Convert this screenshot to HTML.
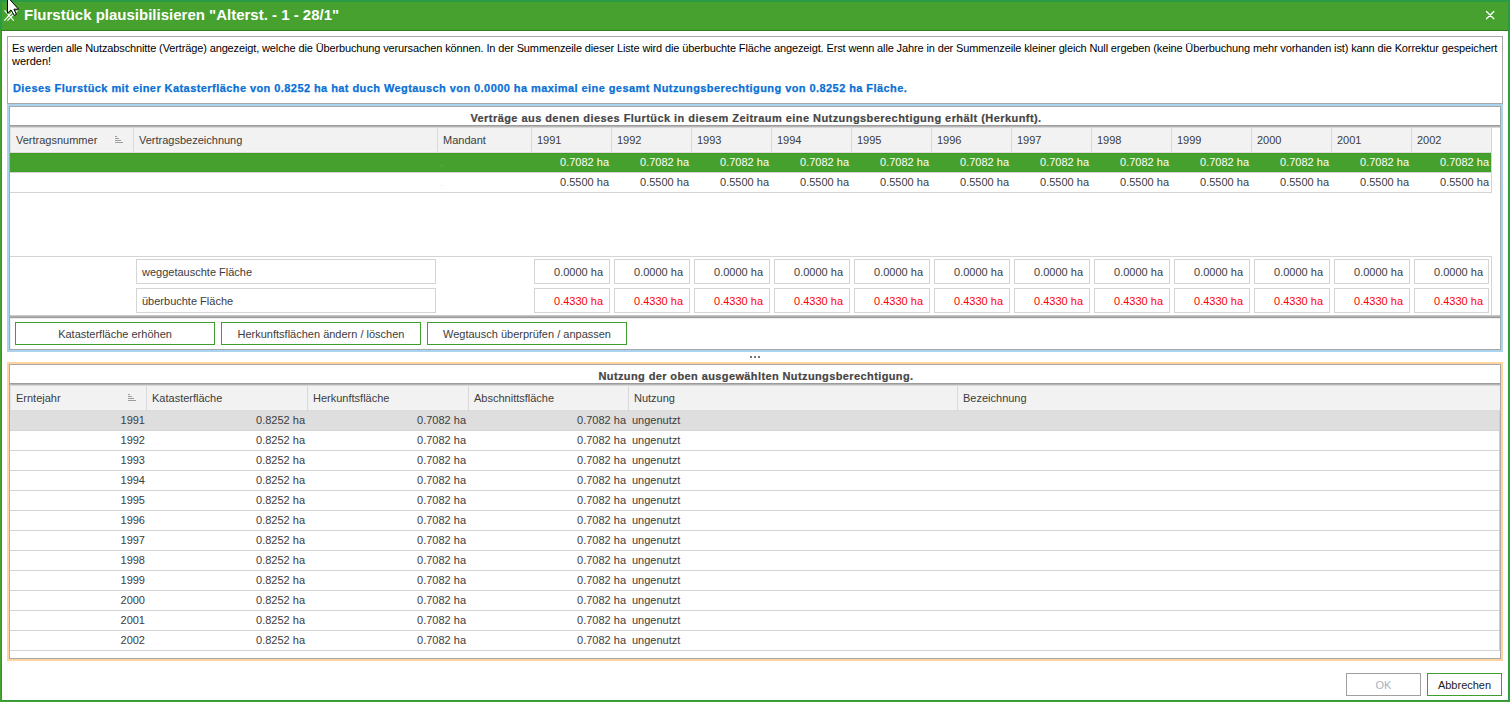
<!DOCTYPE html>
<html><head><meta charset="utf-8"><style>
html,body{margin:0;padding:0;width:1510px;height:702px;overflow:hidden;background:#fff;position:relative}
body>div,body>svg{position:absolute}
.t{font-family:"Liberation Sans",sans-serif;font-size:11px;line-height:13px;white-space:pre}
</style></head><body>
<div style="left:0px;top:0px;width:1510px;height:702px;background:#47A12F"></div>
<div style="left:0px;top:0px;width:1510px;height:2px;background:#2B9A45"></div>
<div style="left:0px;top:0px;width:2px;height:30px;background:#2B9A45"></div>
<div style="left:1508px;top:0px;width:2px;height:30px;background:#2B9A45"></div>
<div style="left:2px;top:2px;width:1506px;height:28px;background:#47A12F"></div>
<div style="left:1px;top:31px;width:1508px;height:670px;background:#2C973D"></div>
<div style="left:2px;top:31px;width:1506px;height:669px;background:#FFFFFF"></div>
<div style="left:1px;top:30px;width:1508px;height:1px;background:#2E7F1E"></div>
<div class="t" style="left:24px;top:6px;font-size:15px;font-weight:bold;color:#fff;line-height:17px;">Flurstück plausibilisieren "Alterst. - 1 - 28/1"</div>
<svg style="left:1485px;top:10px" width="11" height="11" viewBox="0 0 11 11"><path d="M1.5 1.5L8.8 8.8M8.8 1.5L1.5 8.8" stroke="#fff" stroke-width="1.3" stroke-linecap="round"/></svg>
<svg style="left:0px;top:0px" width="24" height="24" viewBox="0 0 24 24"><g stroke="#fff" stroke-width="1.15" fill="none"><path d="M4.5 10.3L13.8 20.6"/><path d="M4.3 20.6L14 10"/><path d="M7.4 20.6L17.6 10.4"/></g></svg>
<div style="left:7px;top:36px;width:1496px;height:68px;border:1px solid #A8A8A8;box-sizing:border-box;background:#fff"></div>
<div class="t" style="left:12px;top:42px;color:#000;letter-spacing:-0.13px">Es werden alle Nutzabschnitte (Verträge) angezeigt, welche die Überbuchung verursachen können. In der Summenzeile dieser Liste wird die überbuchte Fläche angezeigt. Erst wenn alle Jahre in der Summenzeile kleiner gleich Null ergeben (keine Überbuchung mehr vorhanden ist) kann die Korrektur gespeichert</div>
<div class="t" style="left:12px;top:55px;color:#000">werden!</div>
<div class="t" style="left:13px;top:82px;color:#0A70D6;font-weight:bold;letter-spacing:0.43px;-webkit-text-stroke:0.25px #0A70D6">Dieses Flurstück mit einer Katasterfläche von 0.8252 ha hat duch Wegtausch von 0.0000 ha maximal eine gesamt Nutzungsberechtigung von 0.8252 ha Fläche.</div>
<div style="left:7px;top:104px;width:1496px;height:248px;background:#AAD3F0"></div>
<div style="left:9px;top:106px;width:1492px;height:244px;border:1px solid #A8A8A8;box-sizing:border-box;background:#fff"></div>
<div class="t" style="left:256px;top:112px;width:1000px;text-align:center;font-weight:bold;color:#454545;letter-spacing:0.44px;-webkit-text-stroke:0.2px #454545">Verträge aus denen dieses Flurtück in diesem Zeitraum eine Nutzungsberechtigung erhält (Herkunft).</div>
<div style="left:10px;top:127px;width:1481px;height:25px;background:#F2F2F2"></div>
<div style="left:10px;top:151px;width:1481px;height:1px;background:#F5F5F5"></div>
<div style="left:10px;top:152px;width:1481px;height:1px;background:#DCDADC"></div>
<div style="left:133px;top:127px;width:1px;height:25px;background:#D9D9D9"></div>
<div style="left:437px;top:127px;width:1px;height:25px;background:#D9D9D9"></div>
<div style="left:531px;top:127px;width:1px;height:25px;background:#D9D9D9"></div>
<div style="left:611px;top:127px;width:1px;height:25px;background:#D9D9D9"></div>
<div style="left:691px;top:127px;width:1px;height:25px;background:#D9D9D9"></div>
<div style="left:771px;top:127px;width:1px;height:25px;background:#D9D9D9"></div>
<div style="left:851px;top:127px;width:1px;height:25px;background:#D9D9D9"></div>
<div style="left:931px;top:127px;width:1px;height:25px;background:#D9D9D9"></div>
<div style="left:1011px;top:127px;width:1px;height:25px;background:#D9D9D9"></div>
<div style="left:1091px;top:127px;width:1px;height:25px;background:#D9D9D9"></div>
<div style="left:1171px;top:127px;width:1px;height:25px;background:#D9D9D9"></div>
<div style="left:1251px;top:127px;width:1px;height:25px;background:#D9D9D9"></div>
<div style="left:1331px;top:127px;width:1px;height:25px;background:#D9D9D9"></div>
<div style="left:1411px;top:127px;width:1px;height:25px;background:#D9D9D9"></div>
<div style="left:1491px;top:127px;width:1px;height:25px;background:#D9D9D9"></div>
<div style="left:10px;top:127px;width:1px;height:25px;background:#E4E4E4"></div>
<div style="left:10px;top:125px;width:1490px;height:1px;background:#9C9C9C"></div>
<div style="left:10px;top:126px;width:1490px;height:1px;background:#B4B4B4"></div>
<div style="left:10px;top:127px;width:1490px;height:1px;background:#D8D8D8"></div>
<div class="t" style="left:16px;top:134px;color:#3C3C3C">Vertragsnummer</div>
<div class="t" style="left:139px;top:134px;color:#3C3C3C">Vertragsbezeichnung</div>
<div class="t" style="left:443px;top:134px;color:#3C3C3C">Mandant</div>
<div class="t" style="left:537px;top:134px;color:#3C3C3C">1991</div>
<div class="t" style="left:617px;top:134px;color:#3C3C3C">1992</div>
<div class="t" style="left:697px;top:134px;color:#3C3C3C">1993</div>
<div class="t" style="left:777px;top:134px;color:#3C3C3C">1994</div>
<div class="t" style="left:857px;top:134px;color:#3C3C3C">1995</div>
<div class="t" style="left:937px;top:134px;color:#3C3C3C">1996</div>
<div class="t" style="left:1017px;top:134px;color:#3C3C3C">1997</div>
<div class="t" style="left:1097px;top:134px;color:#3C3C3C">1998</div>
<div class="t" style="left:1177px;top:134px;color:#3C3C3C">1999</div>
<div class="t" style="left:1257px;top:134px;color:#3C3C3C">2000</div>
<div class="t" style="left:1337px;top:134px;color:#3C3C3C">2001</div>
<div class="t" style="left:1417px;top:134px;color:#3C3C3C">2002</div>
<svg style="left:115px;top:135px" width="9" height="9" viewBox="0 0 9 9"><g fill="#9C9C9C"><rect x="0" y="1" width="2" height="1"/><rect x="0" y="3" width="4" height="1"/><rect x="0" y="5" width="6" height="1"/><rect x="0" y="7" width="8" height="1"/></g></svg>
<div style="left:10px;top:153px;width:1481px;height:19px;background:#46A02E"></div>
<div style="left:10px;top:153px;width:1481px;height:1px;background:#3F9C24"></div>
<div style="left:10px;top:171px;width:1481px;height:1px;background:#3F9C24"></div>
<div style="left:10px;top:172px;width:1481px;height:1px;background:#D4D4D4"></div>
<div style="left:10px;top:192px;width:1481px;height:1px;background:#D4D4D4"></div>
<div class="t" style="left:309px;top:156px;width:300px;text-align:right;color:#fff">0.7082 ha</div>
<div class="t" style="left:309px;top:176px;width:300px;text-align:right;color:#3C3C3C">0.5500 ha</div>
<div class="t" style="left:389px;top:156px;width:300px;text-align:right;color:#fff">0.7082 ha</div>
<div class="t" style="left:389px;top:176px;width:300px;text-align:right;color:#3C3C3C">0.5500 ha</div>
<div class="t" style="left:469px;top:156px;width:300px;text-align:right;color:#fff">0.7082 ha</div>
<div class="t" style="left:469px;top:176px;width:300px;text-align:right;color:#3C3C3C">0.5500 ha</div>
<div class="t" style="left:549px;top:156px;width:300px;text-align:right;color:#fff">0.7082 ha</div>
<div class="t" style="left:549px;top:176px;width:300px;text-align:right;color:#3C3C3C">0.5500 ha</div>
<div class="t" style="left:629px;top:156px;width:300px;text-align:right;color:#fff">0.7082 ha</div>
<div class="t" style="left:629px;top:176px;width:300px;text-align:right;color:#3C3C3C">0.5500 ha</div>
<div class="t" style="left:709px;top:156px;width:300px;text-align:right;color:#fff">0.7082 ha</div>
<div class="t" style="left:709px;top:176px;width:300px;text-align:right;color:#3C3C3C">0.5500 ha</div>
<div class="t" style="left:789px;top:156px;width:300px;text-align:right;color:#fff">0.7082 ha</div>
<div class="t" style="left:789px;top:176px;width:300px;text-align:right;color:#3C3C3C">0.5500 ha</div>
<div class="t" style="left:869px;top:156px;width:300px;text-align:right;color:#fff">0.7082 ha</div>
<div class="t" style="left:869px;top:176px;width:300px;text-align:right;color:#3C3C3C">0.5500 ha</div>
<div class="t" style="left:949px;top:156px;width:300px;text-align:right;color:#fff">0.7082 ha</div>
<div class="t" style="left:949px;top:176px;width:300px;text-align:right;color:#3C3C3C">0.5500 ha</div>
<div class="t" style="left:1029px;top:156px;width:300px;text-align:right;color:#fff">0.7082 ha</div>
<div class="t" style="left:1029px;top:176px;width:300px;text-align:right;color:#3C3C3C">0.5500 ha</div>
<div class="t" style="left:1109px;top:156px;width:300px;text-align:right;color:#fff">0.7082 ha</div>
<div class="t" style="left:1109px;top:176px;width:300px;text-align:right;color:#3C3C3C">0.5500 ha</div>
<div class="t" style="left:1189px;top:156px;width:300px;text-align:right;color:#fff">0.7082 ha</div>
<div class="t" style="left:1189px;top:176px;width:300px;text-align:right;color:#3C3C3C">0.5500 ha</div>
<div style="left:441px;top:165px;width:1px;height:1px;background:#62B0C0"></div>
<div style="left:441px;top:185px;width:1px;height:1px;background:#F5D9A8"></div>
<div style="left:1491px;top:127px;width:1px;height:66px;background:#D4D4D4"></div>
<div style="left:1491px;top:256px;width:1px;height:60px;background:#D4D4D4"></div>
<div style="left:10px;top:256px;width:1482px;height:1px;background:#D4D4D4"></div>
<div style="left:136px;top:259px;width:300px;height:25px;border:1px solid #D4D4D4;box-sizing:border-box;background:#fff"></div>
<div style="left:136px;top:288px;width:300px;height:25px;border:1px solid #D4D4D4;box-sizing:border-box;background:#fff"></div>
<div class="t" style="left:142px;top:266px;color:#3C3C3C">weggetauschte Fläche</div>
<div class="t" style="left:142px;top:295px;color:#3C3C3C">überbuchte Fläche</div>
<div style="left:534px;top:259px;width:76px;height:25px;border:1px solid #D4D4D4;box-sizing:border-box;background:#fff"></div>
<div style="left:534px;top:288px;width:76px;height:25px;border:1px solid #D4D4D4;box-sizing:border-box;background:#fff"></div>
<div class="t" style="left:303px;top:266px;width:300px;text-align:right;color:#3C3C3C">0.0000 ha</div>
<div class="t" style="left:303px;top:295px;width:300px;text-align:right;color:#FF0000">0.4330 ha</div>
<div style="left:614px;top:259px;width:76px;height:25px;border:1px solid #D4D4D4;box-sizing:border-box;background:#fff"></div>
<div style="left:614px;top:288px;width:76px;height:25px;border:1px solid #D4D4D4;box-sizing:border-box;background:#fff"></div>
<div class="t" style="left:383px;top:266px;width:300px;text-align:right;color:#3C3C3C">0.0000 ha</div>
<div class="t" style="left:383px;top:295px;width:300px;text-align:right;color:#FF0000">0.4330 ha</div>
<div style="left:694px;top:259px;width:76px;height:25px;border:1px solid #D4D4D4;box-sizing:border-box;background:#fff"></div>
<div style="left:694px;top:288px;width:76px;height:25px;border:1px solid #D4D4D4;box-sizing:border-box;background:#fff"></div>
<div class="t" style="left:463px;top:266px;width:300px;text-align:right;color:#3C3C3C">0.0000 ha</div>
<div class="t" style="left:463px;top:295px;width:300px;text-align:right;color:#FF0000">0.4330 ha</div>
<div style="left:774px;top:259px;width:76px;height:25px;border:1px solid #D4D4D4;box-sizing:border-box;background:#fff"></div>
<div style="left:774px;top:288px;width:76px;height:25px;border:1px solid #D4D4D4;box-sizing:border-box;background:#fff"></div>
<div class="t" style="left:543px;top:266px;width:300px;text-align:right;color:#3C3C3C">0.0000 ha</div>
<div class="t" style="left:543px;top:295px;width:300px;text-align:right;color:#FF0000">0.4330 ha</div>
<div style="left:854px;top:259px;width:76px;height:25px;border:1px solid #D4D4D4;box-sizing:border-box;background:#fff"></div>
<div style="left:854px;top:288px;width:76px;height:25px;border:1px solid #D4D4D4;box-sizing:border-box;background:#fff"></div>
<div class="t" style="left:623px;top:266px;width:300px;text-align:right;color:#3C3C3C">0.0000 ha</div>
<div class="t" style="left:623px;top:295px;width:300px;text-align:right;color:#FF0000">0.4330 ha</div>
<div style="left:934px;top:259px;width:76px;height:25px;border:1px solid #D4D4D4;box-sizing:border-box;background:#fff"></div>
<div style="left:934px;top:288px;width:76px;height:25px;border:1px solid #D4D4D4;box-sizing:border-box;background:#fff"></div>
<div class="t" style="left:703px;top:266px;width:300px;text-align:right;color:#3C3C3C">0.0000 ha</div>
<div class="t" style="left:703px;top:295px;width:300px;text-align:right;color:#FF0000">0.4330 ha</div>
<div style="left:1014px;top:259px;width:76px;height:25px;border:1px solid #D4D4D4;box-sizing:border-box;background:#fff"></div>
<div style="left:1014px;top:288px;width:76px;height:25px;border:1px solid #D4D4D4;box-sizing:border-box;background:#fff"></div>
<div class="t" style="left:783px;top:266px;width:300px;text-align:right;color:#3C3C3C">0.0000 ha</div>
<div class="t" style="left:783px;top:295px;width:300px;text-align:right;color:#FF0000">0.4330 ha</div>
<div style="left:1094px;top:259px;width:76px;height:25px;border:1px solid #D4D4D4;box-sizing:border-box;background:#fff"></div>
<div style="left:1094px;top:288px;width:76px;height:25px;border:1px solid #D4D4D4;box-sizing:border-box;background:#fff"></div>
<div class="t" style="left:863px;top:266px;width:300px;text-align:right;color:#3C3C3C">0.0000 ha</div>
<div class="t" style="left:863px;top:295px;width:300px;text-align:right;color:#FF0000">0.4330 ha</div>
<div style="left:1174px;top:259px;width:76px;height:25px;border:1px solid #D4D4D4;box-sizing:border-box;background:#fff"></div>
<div style="left:1174px;top:288px;width:76px;height:25px;border:1px solid #D4D4D4;box-sizing:border-box;background:#fff"></div>
<div class="t" style="left:943px;top:266px;width:300px;text-align:right;color:#3C3C3C">0.0000 ha</div>
<div class="t" style="left:943px;top:295px;width:300px;text-align:right;color:#FF0000">0.4330 ha</div>
<div style="left:1254px;top:259px;width:76px;height:25px;border:1px solid #D4D4D4;box-sizing:border-box;background:#fff"></div>
<div style="left:1254px;top:288px;width:76px;height:25px;border:1px solid #D4D4D4;box-sizing:border-box;background:#fff"></div>
<div class="t" style="left:1023px;top:266px;width:300px;text-align:right;color:#3C3C3C">0.0000 ha</div>
<div class="t" style="left:1023px;top:295px;width:300px;text-align:right;color:#FF0000">0.4330 ha</div>
<div style="left:1334px;top:259px;width:76px;height:25px;border:1px solid #D4D4D4;box-sizing:border-box;background:#fff"></div>
<div style="left:1334px;top:288px;width:76px;height:25px;border:1px solid #D4D4D4;box-sizing:border-box;background:#fff"></div>
<div class="t" style="left:1103px;top:266px;width:300px;text-align:right;color:#3C3C3C">0.0000 ha</div>
<div class="t" style="left:1103px;top:295px;width:300px;text-align:right;color:#FF0000">0.4330 ha</div>
<div style="left:1414px;top:259px;width:75px;height:25px;border:1px solid #D4D4D4;box-sizing:border-box;background:#fff"></div>
<div style="left:1414px;top:288px;width:75px;height:25px;border:1px solid #D4D4D4;box-sizing:border-box;background:#fff"></div>
<div class="t" style="left:1183px;top:266px;width:300px;text-align:right;color:#3C3C3C">0.0000 ha</div>
<div class="t" style="left:1183px;top:295px;width:300px;text-align:right;color:#FF0000">0.4330 ha</div>
<div style="left:10px;top:315px;width:1490px;height:1px;background:#C8C8C8"></div>
<div style="left:10px;top:316px;width:1490px;height:1px;background:#AEAEAE"></div>
<div style="left:10px;top:317px;width:1490px;height:1px;background:#9C9C9C"></div>
<div style="left:10px;top:318px;width:1490px;height:1px;background:#EEEEEE"></div>
<div style="left:10px;top:318px;width:1px;height:31px;background:#EEEEEE"></div>
<div style="left:15px;top:322px;width:200px;height:23px;border:1px solid #3F9F2E;box-sizing:border-box;background:#fff"></div>
<div class="t" style="left:-385.0px;top:328px;width:1000px;text-align:center;color:#3C3C3C">Katasterfläche erhöhen</div>
<div style="left:221px;top:322px;width:200px;height:23px;border:1px solid #3F9F2E;box-sizing:border-box;background:#fff"></div>
<div class="t" style="left:-179.0px;top:328px;width:1000px;text-align:center;color:#3C3C3C">Herkunftsflächen ändern / löschen</div>
<div style="left:427px;top:322px;width:200px;height:23px;border:1px solid #3F9F2E;box-sizing:border-box;background:#fff"></div>
<div class="t" style="left:27.0px;top:328px;width:1000px;text-align:center;color:#3C3C3C">Wegtausch überprüfen / anpassen</div>
<div style="left:750px;top:356px;width:2px;height:2px;background:#767676"></div>
<div style="left:754px;top:356px;width:2px;height:2px;background:#767676"></div>
<div style="left:758px;top:356px;width:2px;height:2px;background:#767676"></div>
<div style="left:7px;top:362px;width:1496px;height:299px;background:#FFD49E"></div>
<div style="left:9px;top:364px;width:1492px;height:295px;border:1px solid #A8A8A8;box-sizing:border-box;background:#fff"></div>
<div class="t" style="left:256px;top:370px;width:1000px;text-align:center;font-weight:bold;color:#454545;letter-spacing:0.39px;-webkit-text-stroke:0.2px #454545">Nutzung der oben ausgewählten Nutzungsberechtigung.</div>
<div style="left:10px;top:385px;width:1490px;height:25px;background:#F2F2F2"></div>
<div style="left:10px;top:409px;width:1490px;height:1px;background:#F5F5F5"></div>
<div style="left:10px;top:410px;width:1490px;height:1px;background:#DCDADC"></div>
<div style="left:10px;top:383px;width:1490px;height:1px;background:#9C9C9C"></div>
<div style="left:10px;top:384px;width:1490px;height:1px;background:#B4B4B4"></div>
<div style="left:10px;top:385px;width:1490px;height:1px;background:#D8D8D8"></div>
<div style="left:146px;top:385px;width:1px;height:25px;background:#D9D9D9"></div>
<div style="left:307px;top:385px;width:1px;height:25px;background:#D9D9D9"></div>
<div style="left:468px;top:385px;width:1px;height:25px;background:#D9D9D9"></div>
<div style="left:628px;top:385px;width:1px;height:25px;background:#D9D9D9"></div>
<div style="left:957px;top:385px;width:1px;height:25px;background:#D9D9D9"></div>
<div style="left:10px;top:385px;width:1px;height:25px;background:#E4E4E4"></div>
<div class="t" style="left:16px;top:392px;color:#3C3C3C">Erntejahr</div>
<div class="t" style="left:152px;top:392px;color:#3C3C3C">Katasterfläche</div>
<div class="t" style="left:313px;top:392px;color:#3C3C3C">Herkunftsfläche</div>
<div class="t" style="left:474px;top:392px;color:#3C3C3C">Abschnittsfläche</div>
<div class="t" style="left:634px;top:392px;color:#3C3C3C">Nutzung</div>
<div class="t" style="left:963px;top:392px;color:#3C3C3C">Bezeichnung</div>
<svg style="left:128px;top:393px" width="9" height="9" viewBox="0 0 9 9"><g fill="#9C9C9C"><rect x="0" y="1" width="2" height="1"/><rect x="0" y="3" width="4" height="1"/><rect x="0" y="5" width="6" height="1"/><rect x="0" y="7" width="8" height="1"/></g></svg>
<div style="left:10px;top:411px;width:1490px;height:19px;background:#DEDEDE"></div>
<div style="left:10px;top:430px;width:1490px;height:1px;background:#D4D4D4"></div>
<div class="t" style="left:-155px;top:414px;width:300px;text-align:right;color:#3C3C3C">1991</div>
<div class="t" style="left:5px;top:414px;width:300px;text-align:right;color:#3C3C3C">0.8252 ha</div>
<div class="t" style="left:166px;top:414px;width:300px;text-align:right;color:#3C3C3C">0.7082 ha</div>
<div class="t" style="left:326px;top:414px;width:300px;text-align:right;color:#3C3C3C">0.7082 ha</div>
<div class="t" style="left:632px;top:414px;color:#3C3C3C">ungenutzt</div>
<div style="left:10px;top:450px;width:1490px;height:1px;background:#D4D4D4"></div>
<div class="t" style="left:-155px;top:434px;width:300px;text-align:right;color:#3C3C3C">1992</div>
<div class="t" style="left:5px;top:434px;width:300px;text-align:right;color:#3C3C3C">0.8252 ha</div>
<div class="t" style="left:166px;top:434px;width:300px;text-align:right;color:#3C3C3C">0.7082 ha</div>
<div class="t" style="left:326px;top:434px;width:300px;text-align:right;color:#3C3C3C">0.7082 ha</div>
<div class="t" style="left:632px;top:434px;color:#3C3C3C">ungenutzt</div>
<div style="left:10px;top:470px;width:1490px;height:1px;background:#D4D4D4"></div>
<div class="t" style="left:-155px;top:454px;width:300px;text-align:right;color:#3C3C3C">1993</div>
<div class="t" style="left:5px;top:454px;width:300px;text-align:right;color:#3C3C3C">0.8252 ha</div>
<div class="t" style="left:166px;top:454px;width:300px;text-align:right;color:#3C3C3C">0.7082 ha</div>
<div class="t" style="left:326px;top:454px;width:300px;text-align:right;color:#3C3C3C">0.7082 ha</div>
<div class="t" style="left:632px;top:454px;color:#3C3C3C">ungenutzt</div>
<div style="left:10px;top:490px;width:1490px;height:1px;background:#D4D4D4"></div>
<div class="t" style="left:-155px;top:474px;width:300px;text-align:right;color:#3C3C3C">1994</div>
<div class="t" style="left:5px;top:474px;width:300px;text-align:right;color:#3C3C3C">0.8252 ha</div>
<div class="t" style="left:166px;top:474px;width:300px;text-align:right;color:#3C3C3C">0.7082 ha</div>
<div class="t" style="left:326px;top:474px;width:300px;text-align:right;color:#3C3C3C">0.7082 ha</div>
<div class="t" style="left:632px;top:474px;color:#3C3C3C">ungenutzt</div>
<div style="left:10px;top:510px;width:1490px;height:1px;background:#D4D4D4"></div>
<div class="t" style="left:-155px;top:494px;width:300px;text-align:right;color:#3C3C3C">1995</div>
<div class="t" style="left:5px;top:494px;width:300px;text-align:right;color:#3C3C3C">0.8252 ha</div>
<div class="t" style="left:166px;top:494px;width:300px;text-align:right;color:#3C3C3C">0.7082 ha</div>
<div class="t" style="left:326px;top:494px;width:300px;text-align:right;color:#3C3C3C">0.7082 ha</div>
<div class="t" style="left:632px;top:494px;color:#3C3C3C">ungenutzt</div>
<div style="left:10px;top:530px;width:1490px;height:1px;background:#D4D4D4"></div>
<div class="t" style="left:-155px;top:514px;width:300px;text-align:right;color:#3C3C3C">1996</div>
<div class="t" style="left:5px;top:514px;width:300px;text-align:right;color:#3C3C3C">0.8252 ha</div>
<div class="t" style="left:166px;top:514px;width:300px;text-align:right;color:#3C3C3C">0.7082 ha</div>
<div class="t" style="left:326px;top:514px;width:300px;text-align:right;color:#3C3C3C">0.7082 ha</div>
<div class="t" style="left:632px;top:514px;color:#3C3C3C">ungenutzt</div>
<div style="left:10px;top:550px;width:1490px;height:1px;background:#D4D4D4"></div>
<div class="t" style="left:-155px;top:534px;width:300px;text-align:right;color:#3C3C3C">1997</div>
<div class="t" style="left:5px;top:534px;width:300px;text-align:right;color:#3C3C3C">0.8252 ha</div>
<div class="t" style="left:166px;top:534px;width:300px;text-align:right;color:#3C3C3C">0.7082 ha</div>
<div class="t" style="left:326px;top:534px;width:300px;text-align:right;color:#3C3C3C">0.7082 ha</div>
<div class="t" style="left:632px;top:534px;color:#3C3C3C">ungenutzt</div>
<div style="left:10px;top:570px;width:1490px;height:1px;background:#D4D4D4"></div>
<div class="t" style="left:-155px;top:554px;width:300px;text-align:right;color:#3C3C3C">1998</div>
<div class="t" style="left:5px;top:554px;width:300px;text-align:right;color:#3C3C3C">0.8252 ha</div>
<div class="t" style="left:166px;top:554px;width:300px;text-align:right;color:#3C3C3C">0.7082 ha</div>
<div class="t" style="left:326px;top:554px;width:300px;text-align:right;color:#3C3C3C">0.7082 ha</div>
<div class="t" style="left:632px;top:554px;color:#3C3C3C">ungenutzt</div>
<div style="left:10px;top:590px;width:1490px;height:1px;background:#D4D4D4"></div>
<div class="t" style="left:-155px;top:574px;width:300px;text-align:right;color:#3C3C3C">1999</div>
<div class="t" style="left:5px;top:574px;width:300px;text-align:right;color:#3C3C3C">0.8252 ha</div>
<div class="t" style="left:166px;top:574px;width:300px;text-align:right;color:#3C3C3C">0.7082 ha</div>
<div class="t" style="left:326px;top:574px;width:300px;text-align:right;color:#3C3C3C">0.7082 ha</div>
<div class="t" style="left:632px;top:574px;color:#3C3C3C">ungenutzt</div>
<div style="left:10px;top:610px;width:1490px;height:1px;background:#D4D4D4"></div>
<div class="t" style="left:-155px;top:594px;width:300px;text-align:right;color:#3C3C3C">2000</div>
<div class="t" style="left:5px;top:594px;width:300px;text-align:right;color:#3C3C3C">0.8252 ha</div>
<div class="t" style="left:166px;top:594px;width:300px;text-align:right;color:#3C3C3C">0.7082 ha</div>
<div class="t" style="left:326px;top:594px;width:300px;text-align:right;color:#3C3C3C">0.7082 ha</div>
<div class="t" style="left:632px;top:594px;color:#3C3C3C">ungenutzt</div>
<div style="left:10px;top:630px;width:1490px;height:1px;background:#D4D4D4"></div>
<div class="t" style="left:-155px;top:614px;width:300px;text-align:right;color:#3C3C3C">2001</div>
<div class="t" style="left:5px;top:614px;width:300px;text-align:right;color:#3C3C3C">0.8252 ha</div>
<div class="t" style="left:166px;top:614px;width:300px;text-align:right;color:#3C3C3C">0.7082 ha</div>
<div class="t" style="left:326px;top:614px;width:300px;text-align:right;color:#3C3C3C">0.7082 ha</div>
<div class="t" style="left:632px;top:614px;color:#3C3C3C">ungenutzt</div>
<div style="left:10px;top:650px;width:1490px;height:1px;background:#D4D4D4"></div>
<div class="t" style="left:-155px;top:634px;width:300px;text-align:right;color:#3C3C3C">2002</div>
<div class="t" style="left:5px;top:634px;width:300px;text-align:right;color:#3C3C3C">0.8252 ha</div>
<div class="t" style="left:166px;top:634px;width:300px;text-align:right;color:#3C3C3C">0.7082 ha</div>
<div class="t" style="left:326px;top:634px;width:300px;text-align:right;color:#3C3C3C">0.7082 ha</div>
<div class="t" style="left:632px;top:634px;color:#3C3C3C">ungenutzt</div>
<div style="left:1499px;top:411px;width:1px;height:240px;background:#CFCFCF"></div>
<div style="left:1346px;top:673px;width:75px;height:23px;border:1px solid #A0A0A0;box-sizing:border-box;background:#fff"></div>
<div class="t" style="left:883.5px;top:679px;width:1000px;text-align:center;color:#A8B0C0">OK</div>
<div style="left:1427px;top:673px;width:75px;height:23px;border:1px solid #3F9F2E;box-sizing:border-box;background:#fff"></div>
<div class="t" style="left:964.5px;top:679px;width:1000px;text-align:center;color:#222">Abbrechen</div>
<svg style="left:0px;top:0px" width="30" height="30" viewBox="0 0 30 30"><path d="M7.5 -3L7.5 13.2L11 9.9L14.3 15.4L16.4 14.4L13.9 9.2L18.6 9.2Z" fill="#fff" stroke="#000" stroke-width="1" stroke-linejoin="miter"/></svg>
</body></html>
